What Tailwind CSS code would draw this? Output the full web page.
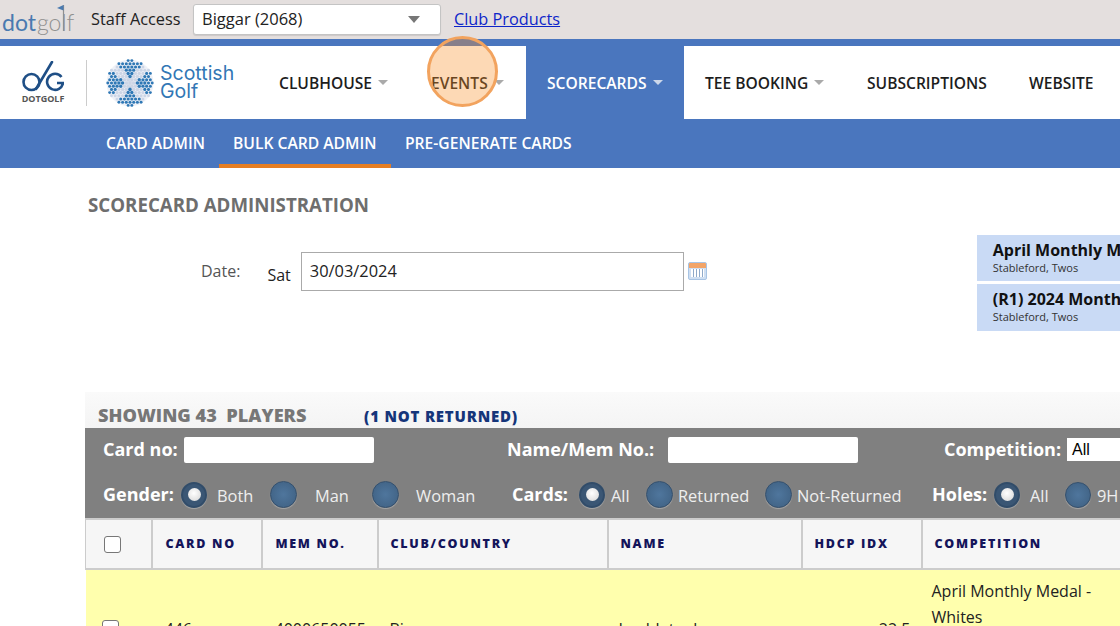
<!DOCTYPE html>
<html lang="en" class="h-[626px] overflow-hidden">
<head>
    <meta charset="UTF-8">
    <title>Scorecard Administration</title>
    <script src="https://cdn.jsdelivr.net/npm/@tailwindcss/browser@4"></script>
</head>
<body class="bg-white w-[1120px] h-[626px] overflow-hidden relative font-['Open_Sans','Noto_Sans',sans-serif] text-[#222]">

<!-- top strip -->
<div class="h-[39px] bg-[#e4dfde] flex items-center">
    <div class="w-[91px] h-[39px] shrink-0">
        <svg class="w-[76px] h-[39px]" viewBox="0 0 76 39" fill="none">
            <text x="2" y="31" font-family="Lato, sans-serif" font-size="23" font-weight="400" fill="#4a7ab0">dot</text>
            <text x="37" y="31" font-family="Lato, sans-serif" font-size="23" font-weight="300" fill="#8f8f8f">golf</text>
            <path d="M63.500 31V5" stroke="#8f8f8f" stroke-width="1.200"/>
            <path d="M63.500 5v5.500l-6.500-2.500z" fill="#4a7ab0"/>
        </svg>
    </div>
    <span class="text-[16.300px] w-[102px] shrink-0 whitespace-nowrap">Staff Access</span>
    <div class="w-[248px] h-[31px] shrink-0 mt-[-1px] bg-white border border-[#c4c4c4] rounded-[3px] flex items-center justify-between pl-[8px] pr-[20px] text-[16.500px] shadow-[0_1px_1px_rgba(0,0,0,0.1)]">
        <span>Biggar (2068)</span>
        <span class="w-0 h-0 border-x-[6px] border-x-transparent border-t-[7px] border-t-[#777]"></span>
    </div>
    <a class="ml-[13px] text-[16.300px] text-[#0d25c9] underline">Club Products</a>
</div>

<!-- main nav -->
<div class="border-t-[7px] border-[#4a76be] bg-white h-[80px] flex items-stretch text-[15.600px] font-semibold text-[#1d1d1d]">
    <div class="w-[259px] shrink-0 flex items-center font-normal">
        <div class="w-[87px] h-[46px] shrink-0 border-r border-[#ccc] flex flex-col items-center justify-center">
            <svg class="w-[42px] h-[31px]" viewBox="0 0 42 31" fill="none" stroke="#1f4f86" stroke-width="2.600">
                <circle cx="9.500" cy="21" r="8"/>
                <path d="M14 28L30 1" stroke-linecap="round"/>
                <path d="M39.500 16a8 8 0 1 0 1.500 6h-6"/>
            </svg>
            <span class="text-[9px] leading-[10px] font-bold text-[#555] mt-[2px]">DOTGOLF</span>
        </div>
        <svg id="ball" class="w-[48px] h-[48px] ml-[19px] shrink-0" viewBox="-24 -24 48 48"></svg>
        <div class="ml-[6px] text-[19.500px] leading-[18px] mt-[-1px] text-[#3277b5] font-['Inter',sans-serif] font-normal">Scottish<br>Golf</div>
    </div>
    <div class="flex items-center w-[147px] pl-[20px] pt-[2px]">CLUBHOUSE<span class="ml-[6px] mb-[3px] w-0 h-0 border-x-[5px] border-x-transparent border-t-[5px] border-t-[#aaa]"></span></div>
    <div class="flex items-center w-[120px] pl-[25px] pt-[2px]">EVENTS<span class="ml-[6px] mb-[3px] w-0 h-0 border-x-[5px] border-x-transparent border-t-[5px] border-t-[#aaa]"></span></div>
    <div class="flex items-center w-[158px] pl-[21px] pt-[2px] bg-[#4a76be] text-white">SCORECARDS<span class="ml-[6px] mb-[3px] w-0 h-0 border-x-[5px] border-x-transparent border-t-[5px] border-t-[#ccd7ea]"></span></div>
    <div class="flex items-center w-[183px] pl-[21px] pt-[2px]">TEE BOOKING<span class="ml-[6px] mb-[3px] w-0 h-0 border-x-[5px] border-x-transparent border-t-[5px] border-t-[#aaa]"></span></div>
    <div class="flex items-center w-[162px] pt-[2px]">SUBSCRIPTIONS</div>
    <div class="flex items-center pt-[2px]">WEBSITE</div>
</div>

<!-- sub nav -->
<div class="h-[49px] bg-[#4a76be] flex pl-[91px] text-white text-[15.650px] font-semibold whitespace-nowrap">
    <div class="pl-[15px] flex items-center w-[128px]">CARD ADMIN</div>
    <div class="pl-[14px] w-[172px] flex items-center border-b-[4px] border-[#e67e22] pt-[4px]">BULK CARD ADMIN</div>
    <div class="pl-[14px] flex items-center">PRE-GENERATE CARDS</div>
</div>

<h1 class="ml-[88px] mt-[24px] text-[18.700px] leading-[25px] font-bold text-[#6e6e6e]">SCORECARD ADMINISTRATION</h1>

<!-- date row -->
<div class="flex mt-[18px] h-[159px] items-start">
    <span class="ml-[201px] mt-[24px] text-[16px] text-[#555]">Date:</span>
    <span class="ml-[27px] mt-[28px] text-[16px]">Sat</span>
    <div class="ml-[10px] mt-[17px] w-[383px] h-[39px] border border-[#aaa] flex items-center pl-[8px] text-[16.400px]">30/03/2024</div>
    <div class="ml-[4px] mt-[27px] w-[19px] h-[18px] rounded-[2px] border border-[#a8c4e4] bg-[#cfdff2] flex flex-col overflow-hidden">
        <div class="h-[5px] bg-[#f2a468]"></div>
        <div class="flex-1 mx-[2px] mb-[2px] mt-[1px] bg-[repeating-linear-gradient(90deg,#ffffff_0,#ffffff_2px,#8fa9c9_2px,#8fa9c9_3px)]"></div>
    </div>
    <div class="ml-[270px] flex flex-col gap-[3px] w-[143px] overflow-hidden shrink-0">
        <div class="h-[46px] bg-[#c9daf5] pl-[16px] pt-[4px] whitespace-nowrap">
            <div class="text-[16px] leading-[22px] font-bold text-[#111]">April Monthly Medal</div>
            <div class="text-[11px] leading-[13px] text-[#333]">Stableford, Twos</div>
        </div>
        <div class="h-[47px] bg-[#c9daf5] pl-[16px] pt-[4px] whitespace-nowrap">
            <div class="text-[16px] leading-[22px] font-bold text-[#111]">(R1) 2024 Monthly</div>
            <div class="text-[11px] leading-[13px] text-[#333]">Stableford, Twos</div>
        </div>
    </div>
</div>

<!-- players panel -->
<div class="ml-[85px] mt-[-2px] w-[1035px]">
    <div class="h-[36px] bg-gradient-to-b from-[#fafafa] to-[#f4f4f4] flex items-end pb-[1px] pl-[13px]">
        <span class="text-[18.200px] leading-[24px] font-extrabold text-[#777] whitespace-pre w-[266px]">SHOWING 43  PLAYERS</span>
        <span class="text-[15px] leading-[22px] font-extrabold text-[#15357a] tracking-[0.800px]">(1 NOT RETURNED)</span>
    </div>

    <div class="h-[90px] bg-[#808080] text-white overflow-hidden">
        <div class="flex items-center h-[43px] text-[18px] font-bold whitespace-nowrap">
            <span class="ml-[18px] w-[81px] shrink-0">Card no:</span>
            <div class="w-[190px] h-[26px] bg-white rounded-[2px] shrink-0"></div>
            <span class="ml-[133px] w-[161px] shrink-0">Name/Mem No.:</span>
            <div class="w-[190px] h-[26px] bg-white rounded-[2px] shrink-0"></div>
            <span class="ml-[86px] w-[123px] shrink-0">Competition:</span>
            <div class="w-[60px] h-[23px] bg-white text-black text-[16px] font-normal leading-[23px] pl-[5px] font-['Liberation_Sans',sans-serif] shrink-0">All</div>
        </div>
        <div class="flex items-center h-[47px] text-[16.400px] whitespace-nowrap">
            <span class="ml-[18px] w-[78px] shrink-0 text-[18px] font-bold">Gender:</span>
            <span class="w-[26px] h-[26px] rounded-full bg-[#3a5674] border-2 border-[#314c69] shadow-[0_1px_1px_rgba(255,255,255,0.3)] flex items-center justify-center shrink-0"><span class="w-[13px] h-[13px] rounded-full bg-[radial-gradient(circle_at_45%_40%,#ffffff,#d4d4d4)]"></span></span>
            <span class="ml-[10px] w-[53px] shrink-0 text-[#eee] pt-[3px]">Both</span>
            <span class="w-[27px] h-[27px] rounded-full bg-[radial-gradient(circle,#4f769d,#3e5f80)] border border-[#34506e] shadow-[0_1px_1px_rgba(255,255,255,0.3)] shrink-0"></span>
            <span class="ml-[18px] w-[57px] shrink-0 text-[#eee] pt-[3px]">Man</span>
            <span class="w-[27px] h-[27px] rounded-full bg-[radial-gradient(circle,#4f769d,#3e5f80)] border border-[#34506e] shadow-[0_1px_1px_rgba(255,255,255,0.3)] shrink-0"></span>
            <span class="ml-[17px] w-[96px] shrink-0 text-[#eee] pt-[3px]">Woman</span>
            <span class="w-[67px] shrink-0 text-[18px] font-bold">Cards:</span>
            <span class="w-[26px] h-[26px] rounded-full bg-[#3a5674] border-2 border-[#314c69] shadow-[0_1px_1px_rgba(255,255,255,0.3)] flex items-center justify-center shrink-0"><span class="w-[13px] h-[13px] rounded-full bg-[radial-gradient(circle_at_45%_40%,#ffffff,#d4d4d4)]"></span></span>
            <span class="ml-[6px] w-[35px] shrink-0 text-[#eee] pt-[3px]">All</span>
            <span class="w-[27px] h-[27px] rounded-full bg-[radial-gradient(circle,#4f769d,#3e5f80)] border border-[#34506e] shadow-[0_1px_1px_rgba(255,255,255,0.3)] shrink-0"></span>
            <span class="ml-[5px] w-[87px] shrink-0 text-[#eee] pt-[3px]">Returned</span>
            <span class="w-[27px] h-[27px] rounded-full bg-[radial-gradient(circle,#4f769d,#3e5f80)] border border-[#34506e] shadow-[0_1px_1px_rgba(255,255,255,0.3)] shrink-0"></span>
            <span class="ml-[5px] w-[135px] shrink-0 text-[#eee] pt-[3px]">Not-Returned</span>
            <span class="w-[62px] shrink-0 text-[18px] font-bold">Holes:</span>
            <span class="w-[26px] h-[26px] rounded-full bg-[#3a5674] border-2 border-[#314c69] shadow-[0_1px_1px_rgba(255,255,255,0.3)] flex items-center justify-center shrink-0"><span class="w-[13px] h-[13px] rounded-full bg-[radial-gradient(circle_at_45%_40%,#ffffff,#d4d4d4)]"></span></span>
            <span class="ml-[10px] w-[35px] shrink-0 text-[#eee] pt-[3px]">All</span>
            <span class="w-[26px] h-[26px] rounded-full bg-[radial-gradient(circle,#4f769d,#3e5f80)] border border-[#34506e] shadow-[0_1px_1px_rgba(255,255,255,0.3)] shrink-0"></span>
            <span class="ml-[6px] text-[#eee] pt-[3px]">9H</span>
        </div>
    </div>

    <table class="table-fixed border-collapse w-[1035px]">
        <colgroup>
            <col class="w-[66px]"><col class="w-[110px]"><col class="w-[116px]"><col class="w-[230px]"><col class="w-[194px]"><col class="w-[120px]"><col class="w-[199px]">
        </colgroup>
        <thead>
            <tr class="h-[50px] bg-[#f6f6f6] text-[12.500px] text-[#14145a] tracking-[1.700px] text-left">
                <th class="border-2 border-[#ccc] border-l-[1px] pl-[18px]"><div class="w-[17px] h-[17px] bg-white border border-[#777] rounded-[3px]"></div></th>
                <th class="border-2 border-[#ccc] pl-[13px] font-extrabold">CARD NO</th>
                <th class="border-2 border-[#ccc] pl-[13px] font-extrabold">MEM NO.</th>
                <th class="border-2 border-[#ccc] pl-[12px] font-extrabold">CLUB/COUNTRY</th>
                <th class="border-2 border-[#ccc] pl-[12px] font-extrabold">NAME</th>
                <th class="border-2 border-[#ccc] pl-[12px] font-extrabold">HDCP IDX</th>
                <th class="border-2 border-[#ccc] border-r-0 pl-[12px] font-extrabold">COMPETITION</th>
            </tr>
        </thead>
        <tbody>
            <tr class="h-[118px] bg-[#ffffad] text-[16px] text-[#222]">
                <td class="pl-[16px]"><div class="w-[17px] h-[17px] bg-white border border-[#777] rounded-[3px]"></div></td>
                <td class="pl-[13px]">446</td>
                <td class="pl-[13px]">4000650055</td>
                <td class="pl-[12px]">Biggar</td>
                <td class="pl-[11px]">Ian bletnel</td>
                <td class="text-right pr-[11px]">22.5</td>
                <td class="align-top pt-[8px] pl-[10px] leading-[26px]">April Monthly Medal -<br>Whites</td>
            </tr>
        </tbody>
    </table>
</div>

<!-- click highlight over the events item -->
<div class="absolute left-[427px] top-[36px] w-[71px] h-[71px] rounded-full bg-[#f8912c]/35 border-[3px] border-[#f2a35e]"></div>

<script>
    // golf ball dots, saltire arms in pale blue
    const ball = document.getElementById('ball');
    let dots = '<circle r="23.500" fill="#eef1f7"/>';
    for (let row = -8; row <= 8; row++) {
        for (let col = -8; col <= 8; col++) {
            const x = col * 3.7 + (row % 2 ? 1.85 : 0);
            const y = row * 3.2;
            const dist = Math.hypot(x, y);
            if (dist > 23) continue;
            const onArm = Math.abs(Math.abs(x) - Math.abs(y)) < 6;
            const r = 1.95 * (1 - dist / 90);
            dots += `<circle cx="${x}" cy="${y}" r="${r}" fill="${onArm ? '#ccd5e6' : '#2f78b5'}"/>`;
        }
    }
    ball.innerHTML = dots;
</script>
</body>
</html>
